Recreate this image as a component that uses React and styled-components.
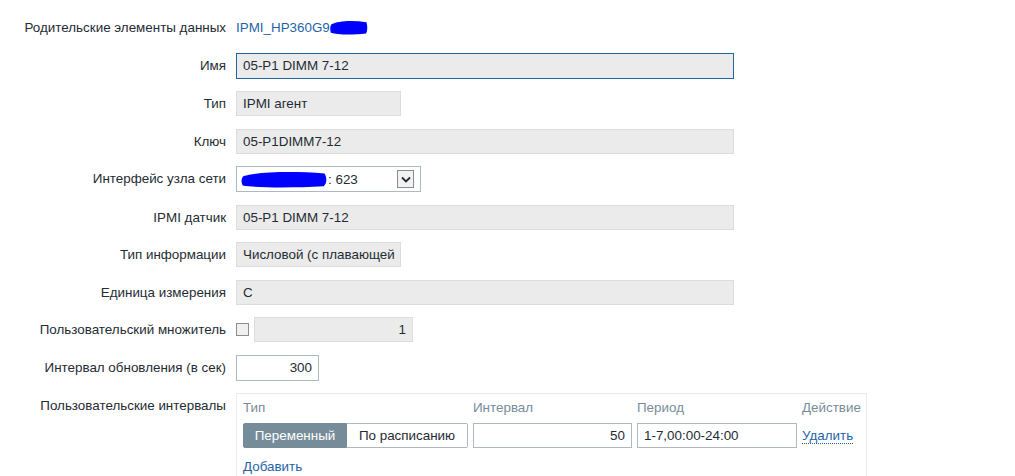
import React from "react";
import styled, { createGlobalStyle } from "styled-components";

const GlobalStyle = createGlobalStyle`
  html, body {
    margin: 0;
    background: #fff;
  }
  body {
    font-family: "Liberation Sans", Arial, sans-serif;
    font-size: 13.4px;
    color: #1f2c33;
  }
`;

const Form = styled.div`
  display: grid;
  grid-template-columns: 226px 1fr;
  column-gap: 10px;
  row-gap: 12.5px;
  padding-top: 15px;
  width: 1015px;
  height: 476px;
  overflow: hidden;
`;

const Label = styled.div`
  text-align: right;
  line-height: 25px;
  height: 25px;
  white-space: nowrap;
`;

const Cell = styled.div`
  display: flex;
  align-items: center;
  gap: 5px;
  min-height: 25px;
`;

const Link = styled.a`
  color: #1f65a6;
  text-decoration: none;
  cursor: pointer;
  border-bottom: ${(p) => (p.$dotted ? "1px dotted #1f65a6" : "none")};
  line-height: 15px;
`;

const Field = styled.div`
  box-sizing: border-box;
  height: ${(p) => (p.$tall ? "26px" : "25px")};
  width: ${(p) => p.$w}px;
  padding: 0 6px;
  display: flex;
  align-items: center;
  justify-content: ${(p) => (p.$right ? "flex-end" : "flex-start")};
  background: ${(p) => (p.$readonly ? "#ebebeb" : "#fff")};
  border: 1px solid
    ${(p) => (p.$focus ? "#1f65a6" : p.$readonly ? "#dcdcdc" : "#acbbc2")};
  white-space: nowrap;
  overflow: hidden;
`;

const Select = styled.div`
  box-sizing: border-box;
  width: 185px;
  height: 26px;
  border: 1px solid #acbbc2;
  background: #fff;
  display: flex;
  align-items: center;
  padding: 0 6px 0 4px;
`;

const SelectValue = styled.div`
  flex: 1;
  display: flex;
  align-items: center;
`;

const DropButton = styled.div`
  width: 17px;
  height: 18px;
  box-sizing: border-box;
  border: 1px solid #8a8a8a;
  background: #f2f2f2;
  display: flex;
  align-items: center;
  justify-content: center;
`;

const Checkbox = styled.div`
  box-sizing: border-box;
  width: 13px;
  height: 13px;
  border: 1px solid #8d8d8d;
  background: #f0f0f0;
`;

const Panel = styled.div`
  box-sizing: border-box;
  width: 631px;
  height: 100px;
  border: 1px solid #ebebeb;
  padding: 4px 6px 0 6px;
`;

const Table = styled.div`
  display: grid;
  grid-template-columns: 225px 159px 160px auto;
  column-gap: 5px;
  row-gap: 5px;
  align-items: center;
`;

const Head = styled.div`
  color: #768d99;
  line-height: 20px;
`;

const Segmented = styled.div`
  display: flex;
  height: 25px;
`;

const Segment = styled.div`
  box-sizing: border-box;
  height: 25px;
  width: ${(p) => p.$w}px;
  display: flex;
  align-items: center;
  justify-content: center;
  border: 1px solid ${(p) => (p.$active ? "#768d99" : "#acbbc2")};
  border-left-width: ${(p) => (p.$active ? "1px" : "0")};
  background: ${(p) => (p.$active ? "#768d99" : "#fff")};
  color: ${(p) => (p.$active ? "#fff" : "#1f2c33")};
  border-radius: ${(p) => (p.$active ? "2px 0 0 2px" : "0 2px 2px 0")};
`;

const AddRow = styled.div`
  margin-top: 11px;
`;

function Scribble({ w, h }) {
  return (
    <svg width={w} height={h} viewBox="0 0 100 20" preserveAspectRatio="none">
      <path
        d="M3 6 C 20 1, 60 0, 96 3 C 99 8, 99 14, 95 18 C 60 20, 20 20, 2 17 C 0 13, 0 9, 3 6 Z"
        fill="#0000ff"
      />
    </svg>
  );
}

function Chevron() {
  return (
    <svg width="10" height="7" viewBox="0 0 10 7">
      <path d="M1 1.5 L5 5.5 L9 1.5" stroke="#1f2c33" strokeWidth="1.8" fill="none" />
    </svg>
  );
}

export default function App() {
  return (
    <>
      <GlobalStyle />
      <Form>
        <Label>Родительские элементы данных</Label>
        <Cell style={{ gap: 0 }}>
          <Link>IPMI_HP360G9</Link>
          <Scribble w={38} h={15} />
        </Cell>

        <Label>Имя</Label>
        <Cell>
          <Field $w={498} $tall $readonly $focus>05-P1 DIMM 7-12</Field>
        </Cell>

        <Label>Тип</Label>
        <Cell>
          <Field $w={165} $readonly>IPMI агент</Field>
        </Cell>

        <Label>Ключ</Label>
        <Cell>
          <Field $w={498} $readonly>05-P1DIMM7-12</Field>
        </Cell>

        <Label>Интерфейс узла сети</Label>
        <Cell>
          <Select>
            <SelectValue>
              <Scribble w={87} h={17} />
              <span>: 623</span>
            </SelectValue>
            <DropButton>
              <Chevron />
            </DropButton>
          </Select>
        </Cell>

        <Label>IPMI датчик</Label>
        <Cell>
          <Field $w={498} $readonly>05-P1 DIMM 7-12</Field>
        </Cell>

        <Label>Тип информации</Label>
        <Cell>
          <Field $w={165} $readonly>Числовой (с плавающей</Field>
        </Cell>

        <Label>Единица измерения</Label>
        <Cell>
          <Field $w={498} $readonly>C</Field>
        </Cell>

        <Label>Пользовательский множитель</Label>
        <Cell>
          <Checkbox />
          <Field $w={159} $readonly $right>1</Field>
        </Cell>

        <Label>Интервал обновления (в сек)</Label>
        <Cell>
          <Field $w={83} $tall $right>300</Field>
        </Cell>

        <Label>Пользовательские интервалы</Label>
        <Cell style={{ alignItems: "flex-start" }}>
          <Panel>
            <Table>
              <Head>Тип</Head>
              <Head>Интервал</Head>
              <Head>Период</Head>
              <Head>Действие</Head>

              <Segmented>
                <Segment $w={104} $active>Переменный</Segment>
                <Segment $w={121}>По расписанию</Segment>
              </Segmented>
              <Field $w={159} $right>50</Field>
              <Field $w={160}>1-7,00:00-24:00</Field>
              <div>
                <Link $dotted>Удалить</Link>
              </div>
            </Table>
            <AddRow>
              <Link>Добавить</Link>
            </AddRow>
          </Panel>
        </Cell>
      </Form>
    </>
  );
}
